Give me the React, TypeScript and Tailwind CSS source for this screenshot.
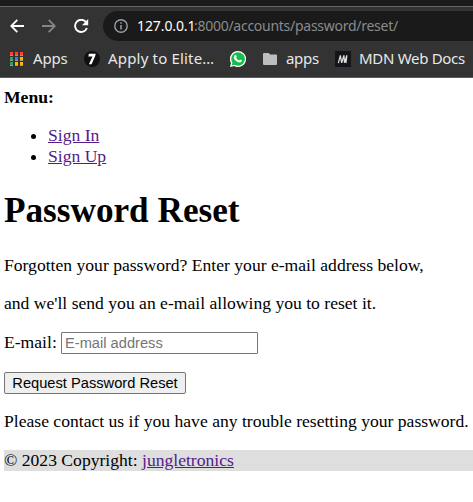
import React from "react";

const DOTS = [
  "#ff4131", "#ff4131", "#ff4131",
  "#2da562", "#2489f4", "#ffb300",
  "#2da562", "#ffb300", "#ffb300",
];

function Toolbar() {
  return (
    <div className="flex h-[34px] items-center pt-1">
      <svg className="ml-[10px] shrink-0" width="14" height="14" viewBox="0 0 14 14" fill="none" stroke="#fff" strokeWidth="1.8">
        <path d="M14 7H1.3M7.3 .8 1.2 7l6.1 6.2" />
      </svg>
      <svg className="ml-[18px] shrink-0" width="14" height="14" viewBox="0 0 14 14" fill="none" stroke="#858585" strokeWidth="1.8">
        <path d="M0 7h12.7M6.7 .8 12.8 7l-6.1 6.2" />
      </svg>
      <svg className="ml-[18px] shrink-0" width="15" height="14" viewBox="0 0 15 14" fill="none">
        <path d="M12 3.1A6.1 6.1 0 1 0 12.9 9" stroke="#fff" strokeWidth="1.9" />
        <path d="M14.2 0v6.3H8z" fill="#fff" />
      </svg>
      <div className="ml-[14px] flex h-[30px] grow items-center rounded-l-full bg-[#1a1a1a] pl-[11px]">
        <svg className="shrink-0" width="14" height="14" viewBox="0 0 14 14" fill="none">
          <circle cx="7" cy="7" r="6.2" stroke="#9aa0a6" strokeWidth="1.4" />
          <path d="M7 6.1v4.5M7 3.2v1.6" stroke="#9aa0a6" strokeWidth="1.5" />
        </svg>
        <span className="ml-[9px] flex whitespace-nowrap text-[14px] leading-5 text-[#8b8b8b]">
          <span className="w-[57px] tracking-[-0.1px] text-white">127.0.0.1</span>
          <span className="tracking-[-0.27px]">:8000/accounts/password/reset/</span>
        </span>
      </div>
    </div>
  );
}

function Bookmarks() {
  return (
    <div className="flex h-9 items-center whitespace-nowrap text-[15px] leading-5 text-[#e8e8e8]">
      <div className="ml-[10px] grid w-[13px] shrink-0 grid-cols-3 gap-x-[2px] gap-y-[1px]">
        {DOTS.map((c, i) => (
          <i key={i} className="h-[4px] w-[3px] border-b border-[#999]" style={{ backgroundColor: c }} />
        ))}
      </div>
      <span className="ml-[10px] w-[51px] pb-0.5 tracking-[-0.15px]">Apps</span>
      <svg className="shrink-0" width="16" height="16" viewBox="0 0 16 16">
        <circle cx="8" cy="8" r="8" fill="#101010" />
        <path d="M4.9 2.8h6.800L11.2 5 7.600 13.300H4.900L8.500 5.500H4.300z" fill="#fff" />
      </svg>
      <span className="ml-[8px] w-[122px] pb-0.5 tracking-[0.18px]">Apply to Elite…</span>
      <svg className="shrink-0" width="16" height="16" viewBox="0 0 16 16">
        <path d="M8 0a8 8 0 1 1-3.8 15L0 16l1-4A8 8 0 0 1 8 0z" fill="#fff" />
        <path d="M8 1.2a6.8 6.8 0 1 1-3.5 12.6l-2.8.7.7-2.8A6.8 6.8 0 0 1 8 1.2z" fill="#12bf4a" />
        <path d="M5.2 4.1c.7-.4 1 .1 1.5 1.5.2.5-.5.9-.5 1.2.6 1.3 1.6 2.2 2.9 2.7.4 0 .8-1 1.2-.9 1.5.7 1.8.9 1.6 1.5-.7 1.6-2.6 1.6-4 1C5.7 10.2 4.3 8.5 3.9 7c-.2-1.2.3-2.3 1.3-2.9z" fill="#fff" />
      </svg>
      <svg className="ml-[17px] shrink-0" width="14" height="12" viewBox="0 0 14 12">
        <path d="M1 0h4.7l1.5 1.6H13q1 0 1 1V11q0 1-1 1H1q-1 0-1-1V1q0-1 1-1z" fill="#bdbdbd" />
      </svg>
      <span className="ml-[9px] w-[49px] pb-0.5 tracking-[-0.3px]">apps</span>
      <svg className="shrink-0" width="16" height="16" viewBox="0 0 16 16">
        <path d="M0 0h16v16H0z" fill="#15141a" />
        <path d="M3.3 12.2 5.400 4.300M5.400 4.300 6.600 11.800M6.600 11.800 9 4.300M9 4.300 9.400 11.800M9.400 11.800 11.900 4.300M11.900 4.300 10.900 12.200" fill="none" stroke="#ddd" strokeWidth="1.2" />
      </svg>
      <span className="ml-2 pb-0.5 tracking-[-0.3px]">MDN Web Docs</span>
    </div>
  );
}

const LINK = "text-[#551a8b] underline";

export default function App() {
  return (
    <div className="h-[502px] w-[473px] overflow-hidden bg-white">
      <header className="h-[78px] border-b border-[#5c5c5c] bg-[#333] font-['Noto_Sans',sans-serif]">
        <div className="h-[7px] border-b border-[#666] bg-[#1b1b1b]" />
        <Toolbar />
        <Bookmarks />
      </header>
      <main className="pl-1 pt-[9px] font-['Liberation_Serif',serif] text-[17.6px] leading-[21px] text-black">
        <strong className="block">Menu:</strong>
        <ul className="mt-[17px] list-disc pl-11">
          <li><a href="#" className={LINK}>Sign In</a></li>
          <li><a href="#" className={LINK}>Sign Up</a></li>
        </ul>
        <h1 className="mt-[23px] text-[35.2px] font-bold leading-[41px]">Password Reset</h1>
        <p className="mt-6">Forgotten your password? Enter your e-mail address below,</p>
        <p className="mt-[17px]">and we'll send you an e-mail allowing you to reset it.</p>
        <div className="mt-[18px] flex h-[22px] items-center">
          <label htmlFor="email" className="w-[57px] pb-px">E-mail:</label>
          <input
            id="email"
            placeholder="E-mail address"
            className="h-[22px] w-[197px] rounded-[1px] border border-[#767676] px-[3px] font-['Liberation_Sans',sans-serif] text-[14.667px] placeholder:text-[#757575]"
          />
        </div>
        <button className="mt-[18px] block h-[22px] w-[182px] whitespace-nowrap rounded-[2px] border border-[#767676] bg-[#efefef] text-center font-['Liberation_Sans',sans-serif] text-[14.667px] leading-5">
          Request Password Reset
        </button>
        <p className="mt-[17px] whitespace-nowrap">Please contact us if you have any trouble resetting your password.</p>
        <footer className="mt-[18px] bg-[#dedede]">
          © 2023 Copyright: <a href="#" className={LINK}>jungletronics</a>
        </footer>
      </main>
    </div>
  );
}
